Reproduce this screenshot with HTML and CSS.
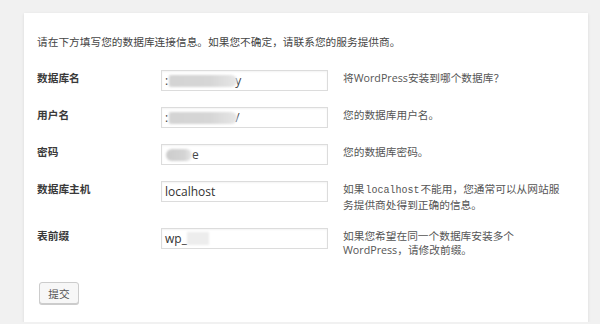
FILE: index.html
```html
<!DOCTYPE html>
<html lang="zh-CN">
<head>
<meta charset="utf-8">
<title>WordPress 安装</title>
<link rel="stylesheet" href="styles.css">
</head>
<body>
<div class="card">
  <p class="intro">请在下方填写您的数据库连接信息。如果您不确定，请联系您的服务提供商。</p>
  <div class="row">
    <div class="label">数据库名</div>
    <div class="field"><span class="ch">:</span><span class="blur blur-long"></span><span class="ch tail">y</span></div>
    <div class="desc">将WordPress安装到哪个数据库？</div>
  </div>
  <div class="row">
    <div class="label">用户名</div>
    <div class="field"><span class="ch">:</span><span class="blur blur-long"></span><span class="ch tail">/</span></div>
    <div class="desc">您的数据库用户名。</div>
  </div>
  <div class="row">
    <div class="label">密码</div>
    <div class="field"><span class="blur blur-pill"></span><span class="ch">e</span></div>
    <div class="desc">您的数据库密码。</div>
  </div>
  <div class="row">
    <div class="label">数据库主机</div>
    <div class="field">localhost</div>
    <div class="desc">如果<code>localhost</code>不能用，您通常可以从网站服务提供商处得到正确的信息。</div>
  </div>
  <div class="row">
    <div class="label">表前缀</div>
    <div class="field">wp_<span class="blur blur-light"></span></div>
    <div class="desc">如果您希望在同一个数据库安装多个WordPress，请修改前缀。</div>
  </div>
  <div class="actions"><button class="btn" type="button">提交</button></div>
</div>
</body>
</html>
```
FILE: styles.css
```css
html, body {
  margin: 0;
  padding: 0;
  background: #f1f1f1;
}
body {
  font-family: "Open Sans", "Noto Sans CJK SC", sans-serif;
  color: #444;
}
.card {
  margin: 13px 12px 0 24px;
  width: 564px;
  box-sizing: border-box;
  background: #fff;
  box-shadow: 0 1px 3px rgba(0,0,0,0.10);
  padding: 22px 0 18px 13px;
}
.intro {
  margin: 0 0 13px;
  font-size: 10.7px;
  line-height: 15px;
  color: #444;
}
.row {
  display: flex;
  align-items: flex-start;
  padding: 7px 0 9px;
}
.label {
  width: 124px;
  flex: none;
  font-size: 10.7px;
  line-height: 15px;
  padding-top: 1px;
  font-weight: bold;
  color: #3a3a3a;
}
.field {
  width: 167px;
  height: 21px;
  box-sizing: border-box;
  flex: none;
  border: 1px solid #dcdcdc;
  box-shadow: inset 0 1px 2px rgba(0,0,0,0.05);
  background: #fff;
  display: flex;
  align-items: center;
  padding: 0 3px;
  font-size: 12px;
  color: #333;
  overflow: hidden;
}
.ch {
  font-size: 12px;
  color: #444;
}
.tail {
  margin-left: -2px;
}
.blur {
  display: inline-block;
  filter: blur(1.2px);
}
.blur-long {
  width: 68px;
  height: 12px;
  margin-left: 1px;
  border-radius: 2px 7px 7px 2px;
  background: linear-gradient(90deg, #d4d4d4 0%, #d6d6d6 60%, #e6e6e6 100%);
}
.blur-pill {
  width: 26px;
  height: 12px;
  margin-left: 1px;
  border-radius: 6px;
  background: linear-gradient(90deg, #cccccc 0%, #d4d4d4 70%, #e8e8e8 100%);
}
.blur-light {
  width: 22px;
  height: 13px;
  background: #ededed;
}
.desc {
  width: 222px;
  margin-left: 15px;
  font-size: 10.7px;
  line-height: 14px;
  padding-top: 1px;
  color: #555;
}
.desc code {
  display: inline-block;
  font-family: "Liberation Mono", "DejaVu Sans Mono", monospace;
  font-size: 10px;
  line-height: 14px;
  margin: 0 1px;
}
.actions {
  padding: 16px 0 0 2px;
  display: flex;
}
.btn {
  width: 40px;
  height: 22px;
  padding: 0;
  font-family: "Noto Sans CJK SC", sans-serif;
  font-size: 10.7px;
  color: #555;
  background: #f7f7f7;
  border: 1px solid #cccccc;
  border-radius: 3px;
  box-shadow: 0 1px 0 #cccccc;
}
```
